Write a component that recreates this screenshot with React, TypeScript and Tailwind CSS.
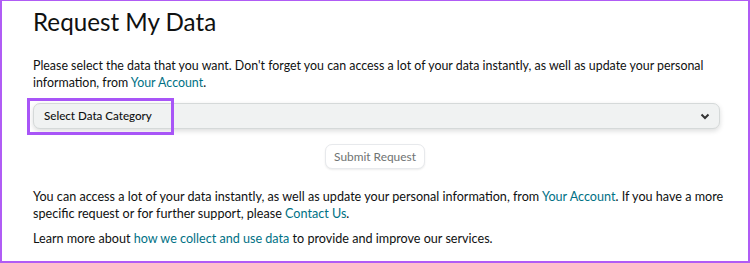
import React from "react";

export default function App() {
  return (
    <div className="w-[750px] h-[263px] bg-white border-l-2 border-r-2 border-t border-b-2 border-[#b05cf5] text-[#0f1111] font-['Lato',sans-serif] overflow-hidden">
      <div className="pl-[31px] pr-[28px] pt-[5px]">
        <h1 className="text-[24.2px] leading-[32px] font-normal">Request My Data</h1>
        <p className="mt-[19px] text-[12.4px] leading-[17px] whitespace-nowrap">
          Please select the data that you want. Don't forget you can access a lot of your data instantly, as well as update your personal
          <br />
          information, from <a className="text-[#007185]">Your Account</a>.
        </p>
        <div className="relative mt-[12px]">
          <div className="h-[26px] w-full rounded-[7px] bg-[#f0f2f2] border border-[#d5d9d9] shadow-[0_2px_5px_rgba(15,17,17,0.15)] flex items-center justify-between pl-[10px] pr-[8px]">
            <span className="text-[11.6px] font-medium">Select Data Category</span>
            <svg width="10" height="7" viewBox="0 0 10 7" className="mr-[1px]">
              <path d="M1.5 1.5 L5 5 L8.5 1.5" fill="none" stroke="#333" strokeWidth="2" />
            </svg>
          </div>
          <div className="absolute left-[-6px] top-[-5px] w-[147px] h-[37px] border-[3px] border-[#a855f7]" />
        </div>
        <div className="flex justify-center mt-[15px] pr-[3px]">
          <button className="h-[25px] px-[8px] rounded-[7px] border border-[#e7e9ec] bg-white text-[11.9px] text-[#6f7373] shadow-[0_1px_2px_rgba(15,17,17,0.08)]">
            Submit Request
          </button>
        </div>
        <p className="mt-[19px] text-[12.6px] leading-[17px] whitespace-nowrap">
          You can access a lot of your data instantly, as well as update your personal information, from <a className="text-[#007185]">Your Account</a>. If you have a more
          <br />
          specific request or for further support, please <a className="text-[#007185]">Contact Us</a>.
        </p>
        <p className="mt-[8px] text-[12.6px] leading-[17px] whitespace-nowrap">
          Learn more about <a className="text-[#007185]">how we collect and use data</a> to provide and improve our services.
        </p>
      </div>
    </div>
  );
}
